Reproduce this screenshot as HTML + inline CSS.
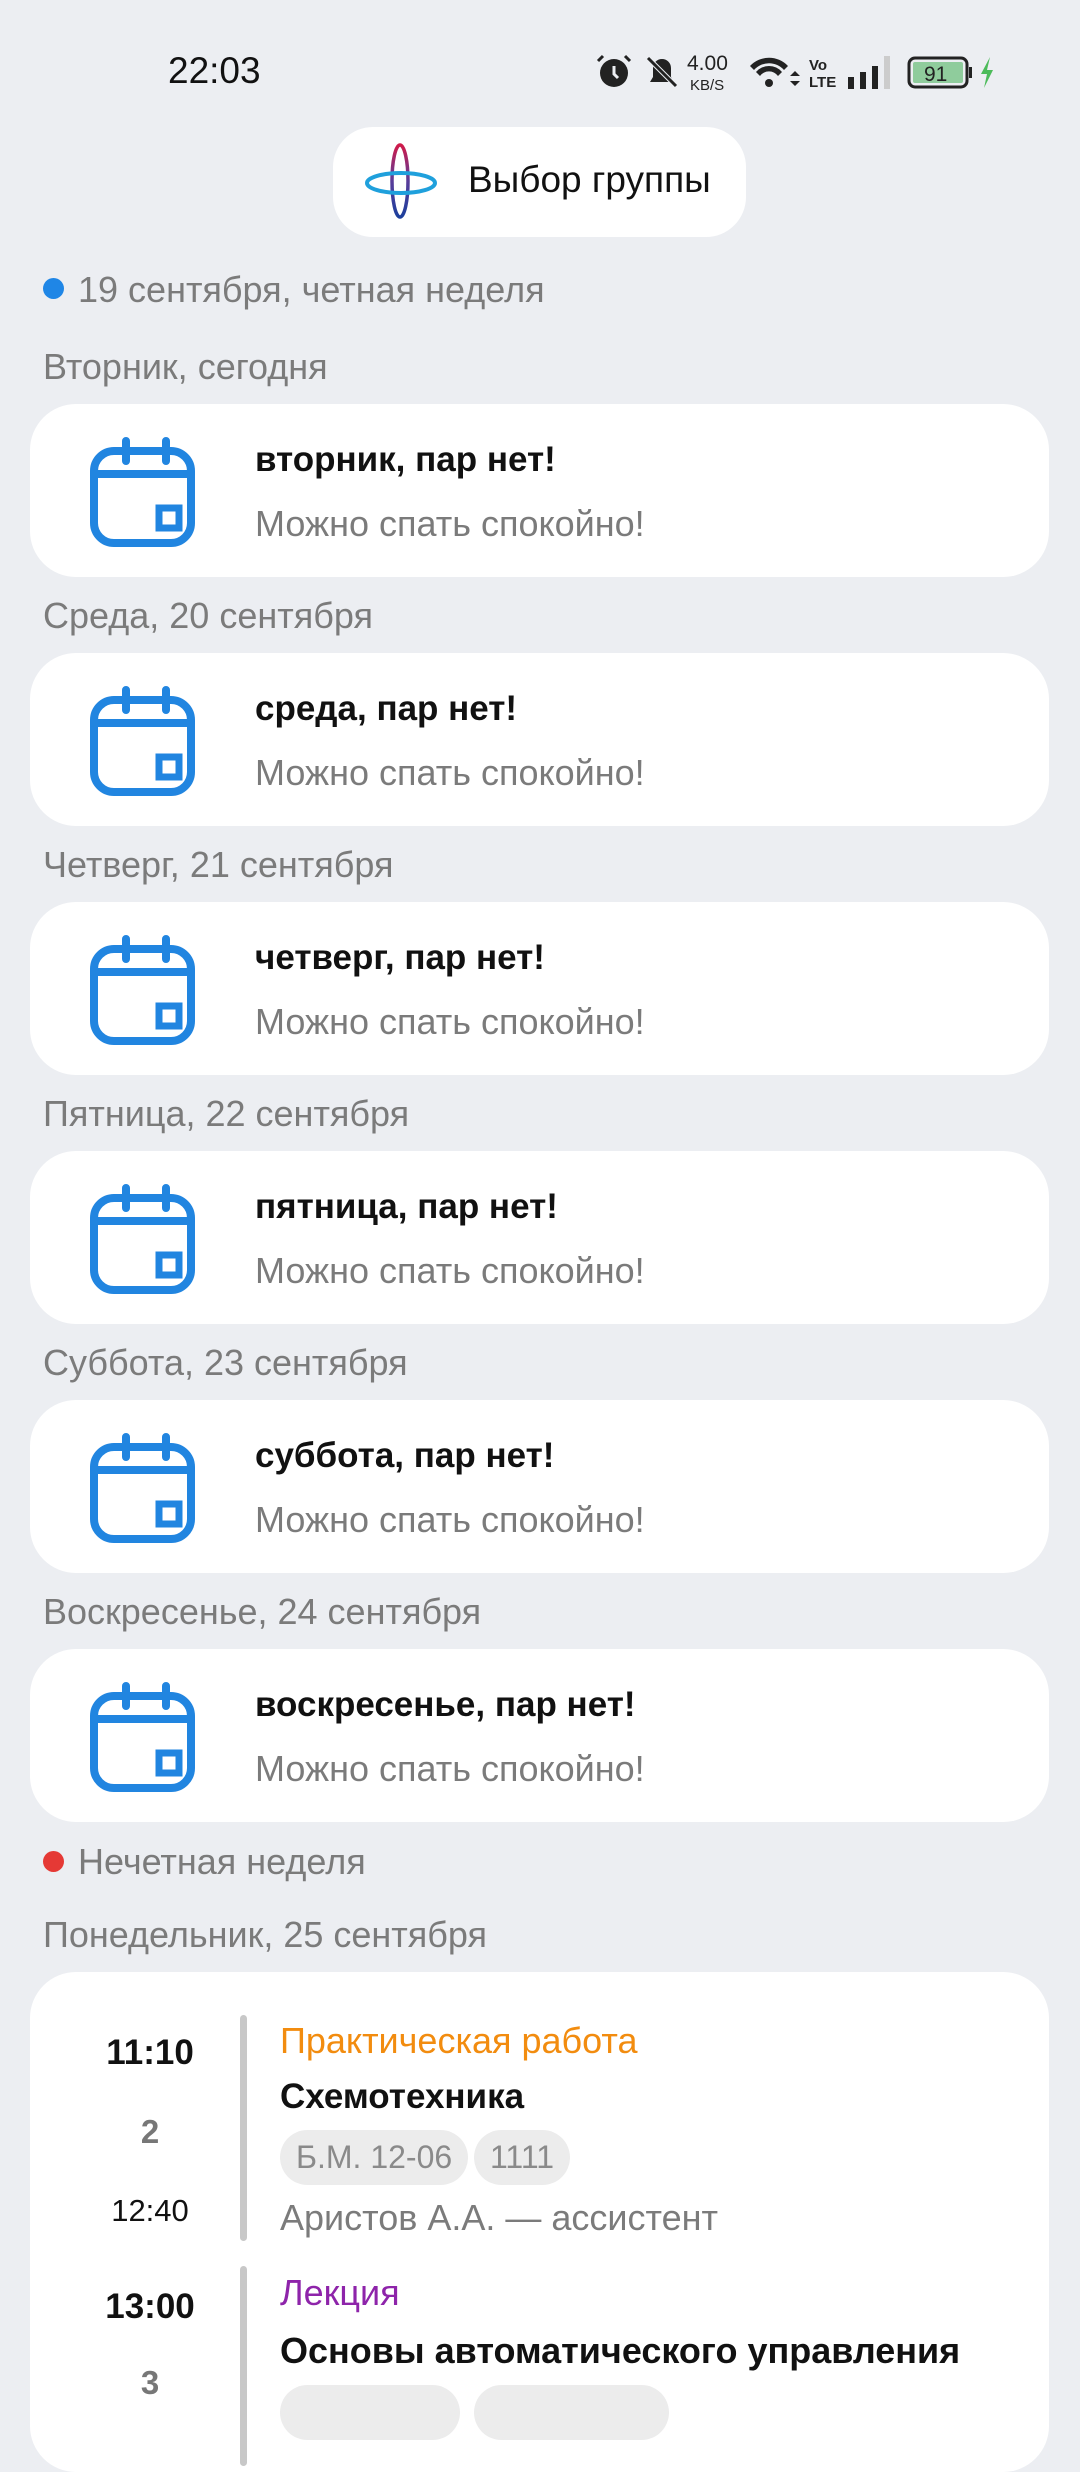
<!DOCTYPE html>
<html><head><meta charset="utf-8">
<style>
*{margin:0;padding:0;box-sizing:border-box}
body{width:1080px;height:2400px;background:#eceef2;font-family:"Liberation Sans",sans-serif;position:relative;overflow:hidden}
.a{position:absolute;white-space:nowrap}
.lbl{font-size:36px;color:#7b7b7b;left:43px}
.card{position:absolute;left:30px;width:1019px;height:173px;background:#fff;border-radius:46px}
.card svg{position:absolute;left:54px;top:30px}
.t1{position:absolute;left:225px;top:36px;font-size:35px;font-weight:bold;color:#111}
.t2{position:absolute;left:225px;top:99px;font-size:36px;color:#7b7b7b}
.chip{position:absolute;height:55px;background:#ececec;border-radius:28px;color:#8a8a8a;font-size:32px;line-height:55px;padding:0 16px}
</style></head><body>
<div class="a" style="left:168px;top:50px;font-size:37px;color:#111">22:03</div>
<svg class="a" style="left:590px;top:48px" width="420" height="46" viewBox="0 0 420 46">
<circle cx="24" cy="25" r="14" fill="#222"/><path d="M13 8l-5 5M35 8l5 5" stroke="#222" stroke-width="3"/><path d="M24 18v8l4 4" stroke="#eceef2" stroke-width="3" fill="none"/>
<path d="M60 34h24l-3-5v-9a9 9 0 0 0-18 0v9z" fill="#222"/><path d="M58 10l28 28" stroke="#eceef2" stroke-width="5"/><path d="M58 10l28 28" stroke="#222" stroke-width="3"/>
<text x="97" y="22" font-size="21" fill="#222" font-family="Liberation Sans">4.00</text><text x="100" y="42" font-size="15" fill="#222" font-family="Liberation Sans">KB/S</text>
<path d="M160 18a26 26 0 0 1 38 0l-4 4a20 20 0 0 0-30 0z M166 24a17 17 0 0 1 26 0l-4 4a11 11 0 0 0-18 0z" fill="#222"/><circle cx="179" cy="35" r="4" fill="#222"/><path d="M200 28l5-5 5 5zM200 33l5 5 5-5z" fill="#222"/>
<text x="219" y="22" font-size="15" font-weight="bold" fill="#222" font-family="Liberation Sans">Vo</text><text x="219" y="39" font-size="15" font-weight="bold" fill="#222" font-family="Liberation Sans">LTE</text>
<rect x="258" y="29" width="6" height="12" fill="#222"/><rect x="270" y="24" width="6" height="17" fill="#222"/><rect x="282" y="18" width="6" height="23" fill="#222"/><rect x="294" y="8" width="6" height="33" fill="#ccc"/>
<rect x="319" y="10" width="58" height="29" rx="6" fill="none" stroke="#222" stroke-width="3"/><rect x="323" y="14" width="50" height="21" rx="2" fill="#8fcc9c"/><rect x="379" y="19" width="3" height="11" fill="#222"/>
<text x="334" y="33" font-size="21" fill="#222" font-family="Liberation Sans">91</text>
<path d="M400 9l-9 17h6l-3 14 9-18h-6z" fill="#4cbb5a"/>
</svg>
<div class="a" style="left:333px;top:127px;width:413px;height:110px;background:#fff;border-radius:40px"></div>
<svg class="a" style="left:360px;top:140px" width="84" height="84" viewBox="0 0 84 84">
<defs><linearGradient id="v" x1="0" y1="0" x2="0" y2="1"><stop offset="0" stop-color="#d01a4a"/><stop offset="0.5" stop-color="#5a3d9a"/><stop offset="1" stop-color="#1c3f9c"/></linearGradient></defs>
<ellipse cx="40" cy="41" rx="8" ry="36" fill="none" stroke="url(#v)" stroke-width="3.5"/>
<ellipse cx="41" cy="43" rx="34" ry="10" fill="none" stroke="#1fa0dc" stroke-width="4"/>
</svg>
<div class="a" style="left:468px;top:159px;font-size:37px;color:#111">Выбор группы</div>
<div class="a" style="left:43px;top:278px;width:21px;height:21px;border-radius:50%;background:#1f86e6"></div>
<div class="a lbl" style="left:78px;top:269px">19 сентября, четная неделя</div>

<div class="a lbl" style="top:346px">Вторник, сегодня</div>
<div class="card" style="top:404px"><svg width="120" height="120" viewBox="0 0 120 120"><g fill="none" stroke="#2185e0" stroke-width="8" stroke-linecap="round"><rect x="10" y="17" width="97" height="92" rx="20"/><path d="M10 40h97M42 7v20M82 7v20"/></g><rect x="75" y="74" width="20" height="20" fill="none" stroke="#2185e0" stroke-width="7"/></svg><div class="t1">вторник, пар нет!</div><div class="t2">Можно спать спокойно!</div></div>

<div class="a lbl" style="top:595px">Среда, 20 сентября</div>
<div class="card" style="top:653px"><svg width="120" height="120" viewBox="0 0 120 120"><g fill="none" stroke="#2185e0" stroke-width="8" stroke-linecap="round"><rect x="10" y="17" width="97" height="92" rx="20"/><path d="M10 40h97M42 7v20M82 7v20"/></g><rect x="75" y="74" width="20" height="20" fill="none" stroke="#2185e0" stroke-width="7"/></svg><div class="t1">среда, пар нет!</div><div class="t2">Можно спать спокойно!</div></div>

<div class="a lbl" style="top:844px">Четверг, 21 сентября</div>
<div class="card" style="top:902px"><svg width="120" height="120" viewBox="0 0 120 120"><g fill="none" stroke="#2185e0" stroke-width="8" stroke-linecap="round"><rect x="10" y="17" width="97" height="92" rx="20"/><path d="M10 40h97M42 7v20M82 7v20"/></g><rect x="75" y="74" width="20" height="20" fill="none" stroke="#2185e0" stroke-width="7"/></svg><div class="t1">четверг, пар нет!</div><div class="t2">Можно спать спокойно!</div></div>

<div class="a lbl" style="top:1093px">Пятница, 22 сентября</div>
<div class="card" style="top:1151px"><svg width="120" height="120" viewBox="0 0 120 120"><g fill="none" stroke="#2185e0" stroke-width="8" stroke-linecap="round"><rect x="10" y="17" width="97" height="92" rx="20"/><path d="M10 40h97M42 7v20M82 7v20"/></g><rect x="75" y="74" width="20" height="20" fill="none" stroke="#2185e0" stroke-width="7"/></svg><div class="t1">пятница, пар нет!</div><div class="t2">Можно спать спокойно!</div></div>

<div class="a lbl" style="top:1342px">Суббота, 23 сентября</div>
<div class="card" style="top:1400px"><svg width="120" height="120" viewBox="0 0 120 120"><g fill="none" stroke="#2185e0" stroke-width="8" stroke-linecap="round"><rect x="10" y="17" width="97" height="92" rx="20"/><path d="M10 40h97M42 7v20M82 7v20"/></g><rect x="75" y="74" width="20" height="20" fill="none" stroke="#2185e0" stroke-width="7"/></svg><div class="t1">суббота, пар нет!</div><div class="t2">Можно спать спокойно!</div></div>

<div class="a lbl" style="top:1591px">Воскресенье, 24 сентября</div>
<div class="card" style="top:1649px"><svg width="120" height="120" viewBox="0 0 120 120"><g fill="none" stroke="#2185e0" stroke-width="8" stroke-linecap="round"><rect x="10" y="17" width="97" height="92" rx="20"/><path d="M10 40h97M42 7v20M82 7v20"/></g><rect x="75" y="74" width="20" height="20" fill="none" stroke="#2185e0" stroke-width="7"/></svg><div class="t1">воскресенье, пар нет!</div><div class="t2">Можно спать спокойно!</div></div>

<div class="a" style="left:43px;top:1851px;width:21px;height:21px;border-radius:50%;background:#e53935"></div>
<div class="a lbl" style="left:78px;top:1841px">Нечетная неделя</div>
<div class="a lbl" style="top:1914px">Понедельник, 25 сентября</div>

<div class="a" style="left:30px;top:1972px;width:1019px;height:500px;background:#fff;border-radius:46px"></div>
<div class="a" style="left:240px;top:2015px;width:7px;height:226px;background:#c8c8c8;border-radius:4px"></div>
<div class="a" style="left:240px;top:2266px;width:7px;height:200px;background:#c8c8c8;border-radius:4px"></div>
<div class="a" style="left:90px;width:120px;text-align:center;top:2033px;font-size:35px;font-weight:bold;color:#111">11:10</div>
<div class="a" style="left:90px;width:120px;text-align:center;top:2113px;font-size:33px;font-weight:bold;color:#777">2</div>
<div class="a" style="left:90px;width:120px;text-align:center;top:2193px;font-size:31px;color:#111">12:40</div>
<div class="a" style="left:280px;top:2020px;font-size:36px;color:#f28c0f">Практическая работа</div>
<div class="a" style="left:280px;top:2077px;font-size:35px;font-weight:bold;color:#111">Схемотехника</div>
<div class="chip" style="left:280px;top:2130px">Б.М. 12-06</div>
<div class="chip" style="left:474px;top:2130px">1111</div>
<div class="a" style="left:280px;top:2197px;font-size:36px;color:#7b7b7b">Аристов А.А. — ассистент</div>
<div class="a" style="left:90px;width:120px;text-align:center;top:2287px;font-size:35px;font-weight:bold;color:#111">13:00</div>
<div class="a" style="left:90px;width:120px;text-align:center;top:2364px;font-size:33px;font-weight:bold;color:#777">3</div>
<div class="a" style="left:280px;top:2272px;font-size:36px;color:#8e24aa">Лекция</div>
<div class="a" style="left:280px;top:2330px;font-size:36px;font-weight:bold;color:#111">Основы автоматического управления</div>
<div class="chip" style="left:280px;top:2385px;width:180px"></div>
<div class="chip" style="left:474px;top:2385px;width:195px"></div>
</body></html>
